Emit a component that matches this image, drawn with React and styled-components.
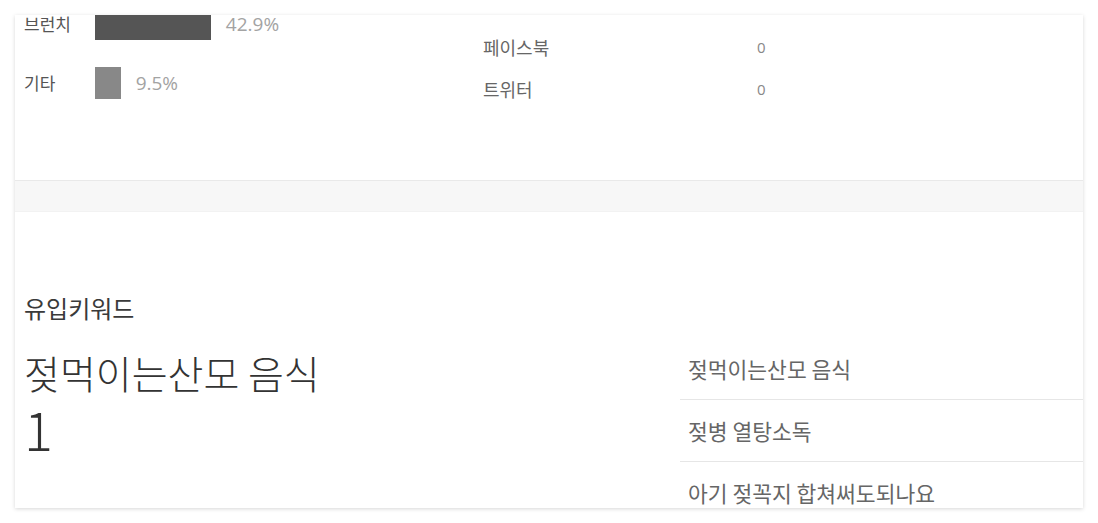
import React from 'react';
import styled, { createGlobalStyle } from 'styled-components';

const GlobalStyle = createGlobalStyle`
  html, body {
    margin: 0;
    padding: 0;
    background: #fff;
  }
  body {
    font-family: 'Noto Sans CJK KR', 'Noto Sans', sans-serif;
  }
`;

const Page = styled.div`
  padding: 15px;
  height: 523px;
  box-sizing: border-box;
`;

const Card = styled.div`
  width: 1068px;
  height: 493px;
  overflow: hidden;
  background: #fff;
  box-shadow: 0 1px 4px rgba(0, 0, 0, 0.16);
`;

const Scroller = styled.div`
  margin-top: -96px;
`;

const Stats = styled.section`
  display: grid;
  grid-template-columns: 459px 1fr;
  height: 261px;
  box-sizing: border-box;
  padding-top: 16px;
`;

const BarList = styled.div`
  display: flex;
  flex-direction: column;
`;

const BarRow = styled.div`
  display: flex;
  align-items: center;
  height: 59px;
  padding-left: 9px;
`;

const BarLabel = styled.span`
  width: 71px;
  font-size: 17px;
  color: #555;
`;

const Bar = styled.div`
  height: 32px;
  background: ${(p) => p.$color};
`;

const Percent = styled.span`
  margin-left: 15px;
  font-family: 'Open Sans', 'Noto Sans', sans-serif;
  font-size: 19px;
  color: #a3a3a3;
`;

const CountList = styled.div`
  display: flex;
  flex-direction: column;
  padding-top: 7px;
`;

const CountRow = styled.div`
  display: flex;
  align-items: center;
  height: 42px;
  padding-left: 9px;
`;

const CountLabel = styled.span`
  width: 274px;
  font-size: 18px;
  color: #666;
`;

const CountValue = styled.span`
  font-family: 'Open Sans', 'Noto Sans', sans-serif;
  font-size: 15px;
  color: #888;
`;

const Band = styled.div`
  height: 32px;
  box-sizing: border-box;
  background: #f7f7f7;
  border-top: 1px solid #e9e9e9;
  border-bottom: 1px solid #f2f2f2;
`;

const Keywords = styled.section`
  display: grid;
  grid-template-columns: 665px 1fr;
`;

const KeywordMain = styled.div`
  padding: 80px 0 0 9px;
  display: flex;
  flex-direction: column;
`;

const SectionTitle = styled.h3`
  margin: 0;
  font-size: 24px;
  font-weight: 400;
  line-height: 31px;
  color: #3a3a3a;
`;

const TopKeyword = styled.div`
  margin-top: 26px;
  font-size: 39px;
  font-weight: 300;
  line-height: 47px;
  color: #333;
`;

const TopCount = styled.div`
  font-size: 54px;
  font-weight: 300;
  line-height: 64px;
  color: #333;
`;

const KeywordList = styled.ul`
  list-style: none;
  margin: 0;
  padding: 125px 0 0;
`;

const KeywordItem = styled.li`
  height: 62px;
  display: flex;
  align-items: center;
  padding-left: 8px;
  font-size: 21.5px;
  color: #666;
  border-top: ${(p) => (p.$first ? 'none' : '1px solid #e6e6e6')};
  box-sizing: border-box;
`;

const channels = [
  { label: '블로그', value: 47.6, color: '#333' },
  { label: '브런치', value: 42.9, color: '#555' },
  { label: '기타', value: 9.5, color: '#888' },
];

const shares = [
  { label: '카카오스토리', value: 0 },
  { label: '카카오톡', value: 0 },
  { label: '페이스북', value: 0 },
  { label: '트위터', value: 0 },
];

const keywords = ['젖먹이는산모 음식', '젖병 열탕소독', '아기 젖꼭지 합쳐써도되나요'];

const App = () => (
  <>
    <GlobalStyle />
    <Page>
      <Card>
        <Scroller>
          <Stats>
            <BarList>
              {channels.map((c) => (
                <BarRow key={c.label}>
                  <BarLabel>{c.label}</BarLabel>
                  <Bar $color={c.color} style={{ width: `${c.value * 2.7}px` }} />
                  <Percent>{c.value}%</Percent>
                </BarRow>
              ))}
            </BarList>
            <CountList>
              {shares.map((s) => (
                <CountRow key={s.label}>
                  <CountLabel>{s.label}</CountLabel>
                  <CountValue>{s.value}</CountValue>
                </CountRow>
              ))}
            </CountList>
          </Stats>
          <Band />
          <Keywords>
            <KeywordMain>
              <SectionTitle>유입키워드</SectionTitle>
              <TopKeyword>젖먹이는산모 음식</TopKeyword>
              <TopCount>1</TopCount>
            </KeywordMain>
            <KeywordList>
              {keywords.map((k, i) => (
                <KeywordItem key={k} $first={i === 0}>
                  {k}
                </KeywordItem>
              ))}
            </KeywordList>
          </Keywords>
        </Scroller>
      </Card>
    </Page>
  </>
);

export default App;
